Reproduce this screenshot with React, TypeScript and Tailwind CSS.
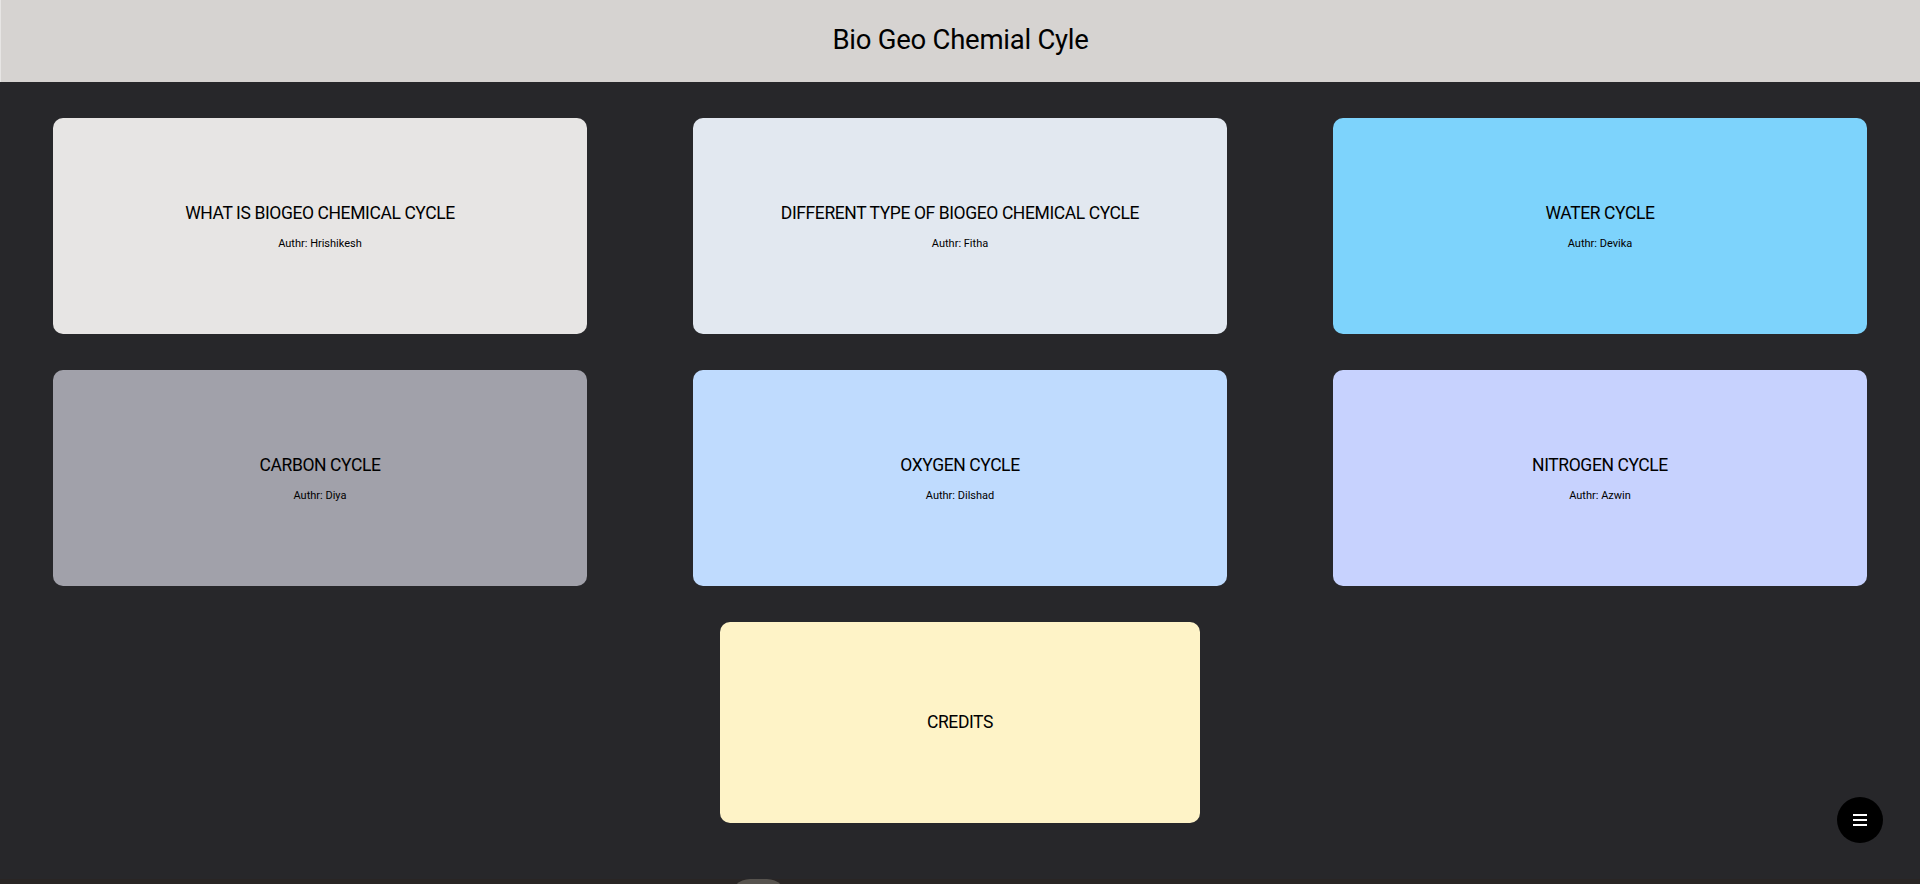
import React from "react";

const cards = [
  { title: "WHAT IS BIOGEO CHEMICAL CYCLE", author: "Hrishikesh", bg: "bg-[#e7e5e4]" },
  { title: "DIFFERENT TYPE OF BIOGEO CHEMICAL CYCLE", author: "Fitha", bg: "bg-[#e2e8f0]" },
  { title: "WATER CYCLE", author: "Devika", bg: "bg-[#7dd3fc]" },
  { title: "CARBON CYCLE", author: "Diya", bg: "bg-[#a1a1aa]" },
  { title: "OXYGEN CYCLE", author: "Dilshad", bg: "bg-[#bfdbfe]" },
  { title: "NITROGEN CYCLE", author: "Azwin", bg: "bg-[#c7d2fe]" },
];

export default function App() {
  return (
    <div className="min-h-screen bg-[#27272a] font-['Roboto',sans-serif] text-black">
      <header className="h-[82px] bg-[#d6d3d1] border-l border-[#e7e5e4] flex items-center justify-center pb-[2px]">
        <h1 className="text-[27.5px] leading-none tracking-[-0.25px] text-black">Bio Geo Chemial Cyle</h1>
      </header>
      <main className="pt-9 pb-14">
        <div className="grid grid-cols-3 gap-y-9">
          {cards.map((c) => (
            <div
              key={c.title}
              className={`mx-[53px] h-[216px] rounded-[10px] ${c.bg} flex flex-col items-center justify-center`}
            >
              <div className="text-[17.5px] leading-[26px] tracking-[-0.4px]">{c.title}</div>
              <div className="mt-[10px] text-[11px] leading-[16px]">Authr: {c.author}</div>
            </div>
          ))}
        </div>
        <div className="mt-9 flex justify-center">
          <div className="w-[480px] h-[201px] rounded-[10px] bg-[#fef3c7] flex items-center justify-center pb-[2px]">
            <div className="text-[17.5px] leading-[26px] tracking-[-0.4px]">CREDITS</div>
          </div>
        </div>
      </main>
      <footer className="h-[60px] bg-[#292524] relative">
        <div className="absolute left-[730px] top-0 w-[57px] h-[40px] rounded-t-[20px] bg-[#57534e]" />
      </footer>
      <button className="fixed right-[37px] bottom-[41px] w-[46px] h-[46px] rounded-full bg-black flex flex-col items-center justify-center gap-[2.7px]">
        <span className="block w-[14px] h-[2px] bg-white" />
        <span className="block w-[14px] h-[2px] bg-white" />
        <span className="block w-[14px] h-[2px] bg-white" />
      </button>
    </div>
  );
}
